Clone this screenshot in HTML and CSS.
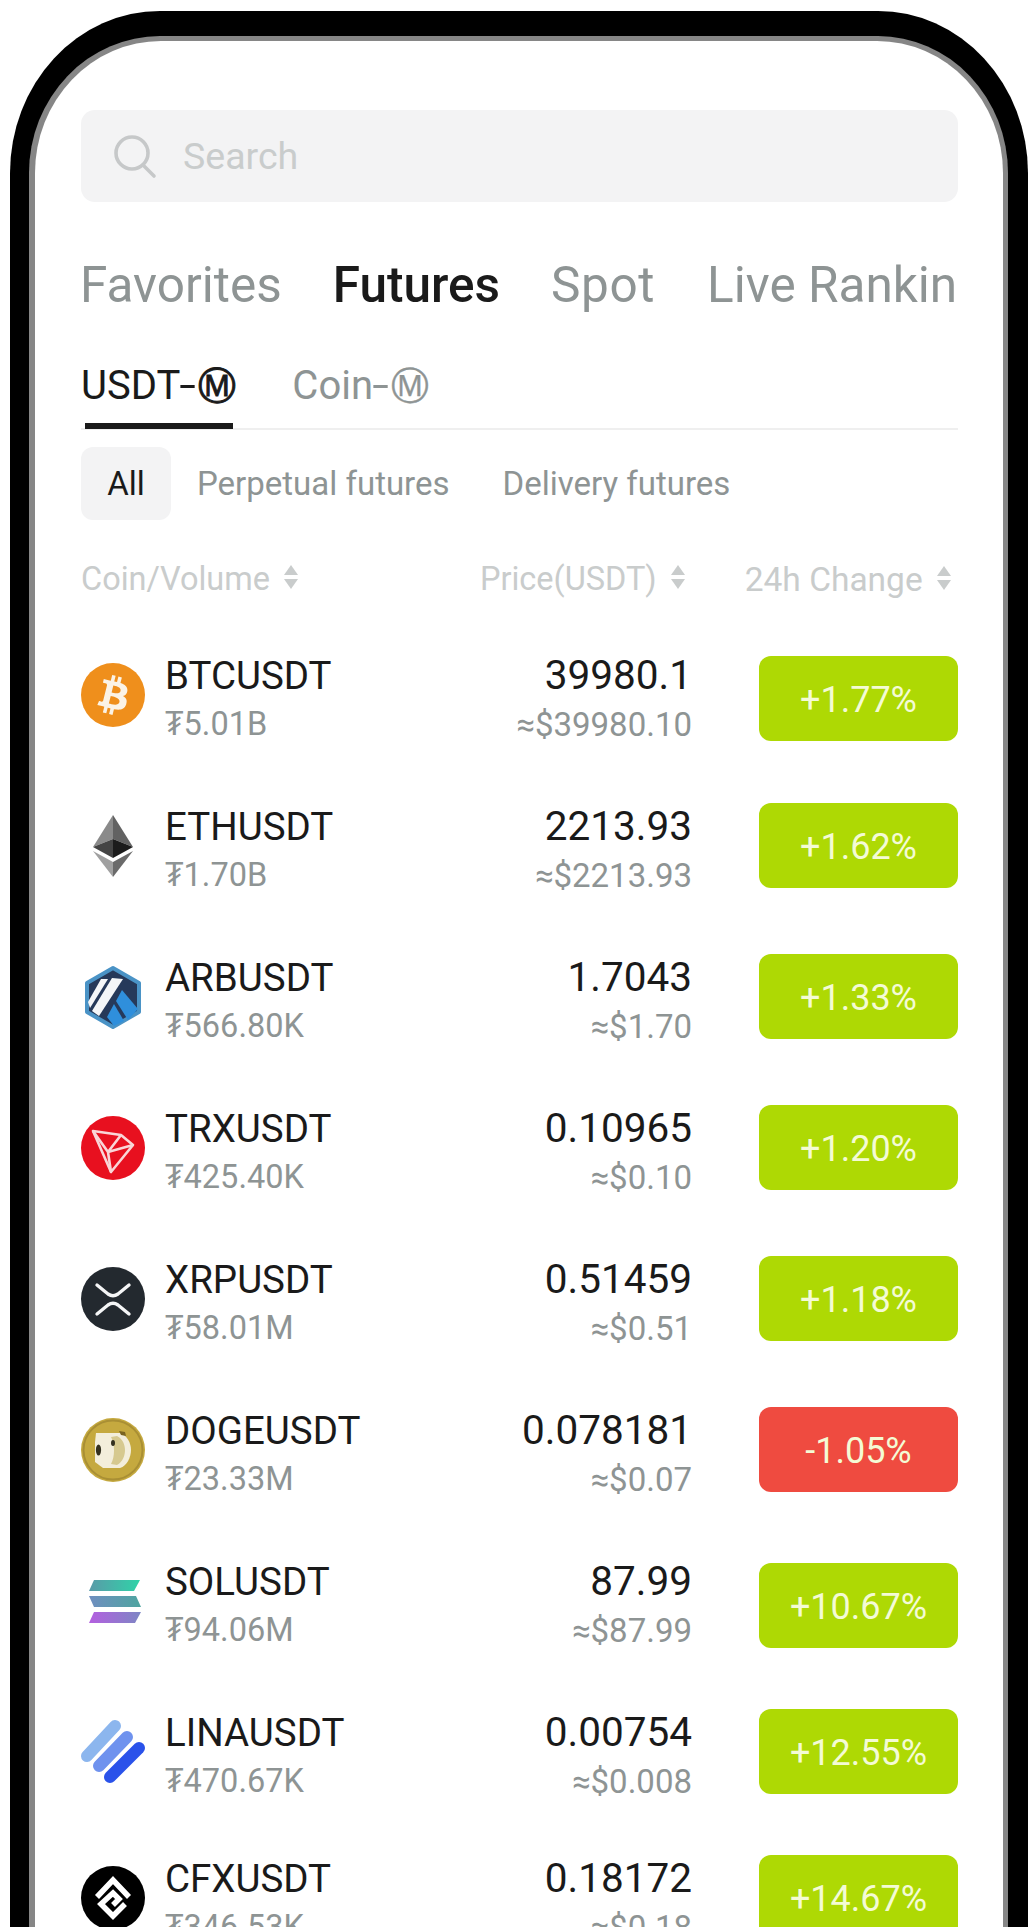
FILE: index.html
```html
<!DOCTYPE html>
<html lang="en">
<head>
  <meta charset="UTF-8" />
  <meta name="viewport" content="width=device-width, initial-scale=1.0"/>
  <title>Markets</title>
  <link rel="stylesheet" href="styles.css">
</head>
<body>
  <div class="phone">
    <div class="screen">

      <div class="search">
        <svg class="search-icon" viewBox="0 0 46 46" width="46" height="46">
          <circle cx="21" cy="20" r="16" fill="none" stroke="#c6c8c9" stroke-width="3.6"/>
          <path d="M32 32l11 11" fill="none" stroke="#c6c8c9" stroke-width="3.6" stroke-linecap="round"/>
        </svg>
        <span>Search</span>
      </div>

      <div class="tabs">
        <span>Favorites</span>
        <span class="active">Futures</span>
        <span class="spot">Spot</span>
        <span class="live">Live Rankin</span>
      </div>

      <div class="margin-tabs">
        <div class="margin-tab active">USDT<span class="dash">-</span><span class="m-mark">Ⓜ</span></div>
        <div class="margin-tab">Coin<span class="dash">-</span><span class="m-mark">Ⓜ</span></div>
      </div>

      <div class="filters">
        <span class="filter active">All</span>
        <span class="filter">Perpetual futures</span>
        <span class="filter">Delivery futures</span>
      </div>

      <div class="list-head">
        <div class="head-cell">Coin/Volume <i class="sort"></i></div>
        <div class="head-cell head-price">Price(USDT) <i class="sort"></i></div>
        <div class="head-cell head-change">24h Change <i class="sort"></i></div>
      </div>

      <div class="row">
        <svg class="coin" viewBox="0 0 32 32"><circle cx="16" cy="16" r="16" fill="#ef8f1c"/><path fill="#fbf3e6" d="M23.189 14.02c.314-2.096-1.283-3.223-3.465-3.975l.708-2.84-1.728-.43-.69 2.765c-.454-.114-.92-.22-1.385-.326l.695-2.783L15.596 6l-.708 2.839c-.376-.086-.746-.17-1.104-.26l.002-.009-2.384-.595-.46 1.846s1.283.294 1.256.312c.7.175.826.638.805 1.006l-.806 3.235c.048.012.11.03.18.057l-.183-.045-1.13 4.532c-.086.212-.303.531-.793.41.018.025-1.256-.313-1.256-.313l-.858 1.978 2.25.561c.418.105.828.215 1.231.318l-.715 2.872 1.727.43.708-2.84c.472.127.93.245 1.378.357l-.706 2.828 1.728.43.715-2.866c2.948.558 5.164.333 6.097-2.333.752-2.146-.037-3.385-1.588-4.192 1.13-.26 1.98-1.003 2.207-2.538zm-3.95 5.538c-.533 2.147-4.148.986-5.32.695l.95-3.805c1.172.293 4.929.872 4.37 3.11zm.535-5.569c-.487 1.953-3.495.96-4.47.717l.86-3.45c.975.243 4.118.696 3.61 2.733z"/></svg>
        <div class="names"><div class="name">BTCUSDT</div><div class="vol">₮5.01B</div></div>
        <div class="prices"><div class="price">39980.1</div><div class="approx">≈$39980.10</div></div>
        <div class="change up shift-sm">+1.77%</div>
      </div>

      <div class="row">
        <svg class="coin" viewBox="0 0 64 64">
          <polygon points="32,1 12,33 32,25" fill="#8a8a8a"/>
          <polygon points="32,1 52,33 32,25" fill="#626262"/>
          <polygon points="12,33 32,25 32,44" fill="#444"/>
          <polygon points="52,33 32,25 32,44" fill="#1c1c1c"/>
          <polygon points="12,37 32,48 32,63" fill="#a0a0a0"/>
          <polygon points="52,37 32,48 32,63" fill="#6a6a6a"/>
        </svg>
        <div class="names"><div class="name">ETHUSDT</div><div class="vol">₮1.70B</div></div>
        <div class="prices"><div class="price">2213.93</div><div class="approx">≈$2213.93</div></div>
        <div class="change up">+1.62%</div>
      </div>

      <div class="row">
        <svg class="coin" viewBox="0 0 64 64">
          <polygon points="32,3 58,18 58,47 32,62 6,47 6,18" fill="#26395a" stroke="#4a93c6" stroke-width="4" stroke-linejoin="round"/>
          <polygon points="31,13 42,14 18,51 11,46" fill="#f4f6f8"/>
          <polygon points="20,14 27,14 9,43 7,37" fill="#f4f6f8"/>
          <polygon points="41,25 57,44 47,55 35,36" fill="#2f8fdc"/>
          <polygon points="33,39 43,56 33,61 26,52" fill="#2f8fdc"/>
        </svg>
        <div class="names"><div class="name">ARBUSDT</div><div class="vol">₮566.80K</div></div>
        <div class="prices"><div class="price">1.7043</div><div class="approx">≈$1.70</div></div>
        <div class="change up">+1.33%</div>
      </div>

      <div class="row">
        <svg class="coin" viewBox="0 0 64 64">
          <circle cx="32" cy="32" r="32" fill="#e8101f"/>
          <g fill="none" stroke="#f9d5d7" stroke-width="2.6" stroke-linejoin="round">
            <polygon points="12,15 40,19 52,29 30,56"/>
            <path d="M12 15l15 21 13-17M27 36l25-7M27 36l3 20"/>
          </g>
        </svg>
        <div class="names"><div class="name">TRXUSDT</div><div class="vol">₮425.40K</div></div>
        <div class="prices"><div class="price">0.10965</div><div class="approx">≈$0.10</div></div>
        <div class="change up">+1.20%</div>
      </div>

      <div class="row">
        <svg class="coin" viewBox="0 0 64 64">
          <circle cx="32" cy="32" r="32" fill="#23292f"/>
          <g fill="none" stroke="#f4f5f6" stroke-width="3.4" stroke-linecap="round">
            <path d="M16 18l11 9c3 2 7 2 10 0l11-9"/>
            <path d="M16 47l11-9c3-2 7-2 10 0l11 9"/>
          </g>
        </svg>
        <div class="names"><div class="name">XRPUSDT</div><div class="vol">₮58.01M</div></div>
        <div class="prices"><div class="price">0.51459</div><div class="approx">≈$0.51</div></div>
        <div class="change up">+1.18%</div>
      </div>

      <div class="row">
        <svg class="coin" viewBox="0 0 64 64">
          <circle cx="32" cy="32" r="32" fill="#c5a93f"/>
          <circle cx="32" cy="32" r="29.5" fill="none" stroke="#a98f34" stroke-width="2"/>
          <path d="M15 15h24c7 2 11 10 11 17s-4 16-11 18H22l-8-6V24z" fill="#f3eedb"/>
          <path d="M36 18c6 3 8 9 8 14s-2 12-8 15l-6-1c4-7 4-20 0-27z" fill="#d6c98f"/>
          <ellipse cx="17.5" cy="32" rx="2.6" ry="5.5" fill="#33301f"/>
          <ellipse cx="32" cy="25" rx="2" ry="3" fill="#33301f"/>
          <path d="M38 13l6 1 1 4-5-1z" fill="#7a6420"/>
        </svg>
        <div class="names"><div class="name">DOGEUSDT</div><div class="vol">₮23.33M</div></div>
        <div class="prices"><div class="price">0.078181</div><div class="approx">≈$0.07</div></div>
        <div class="change down">-1.05%</div>
      </div>

      <div class="row">
        <svg class="coin" viewBox="0 0 64 64">
          <defs>
            <linearGradient id="solA" x1="0" x2="1"><stop offset="0" stop-color="#5a9aa8"/><stop offset="1" stop-color="#2fd3a8"/></linearGradient>
            <linearGradient id="solB" x1="0" x2="1"><stop offset="0" stop-color="#6f8ec0"/><stop offset="1" stop-color="#4fa5a0"/></linearGradient>
            <linearGradient id="solC" x1="0" x2="1"><stop offset="0" stop-color="#b45fe0"/><stop offset="1" stop-color="#7d86c4"/></linearGradient>
          </defs>
          <polygon points="13,11 59,11 53,22 8,22" fill="url(#solA)"/>
          <polygon points="8,27 55,27 60,38 13,38" fill="url(#solB)"/>
          <polygon points="13,43 60,43 54,54 8,54" fill="url(#solC)"/>
        </svg>
        <div class="names"><div class="name">SOLUSDT</div><div class="vol">₮94.06M</div></div>
        <div class="prices"><div class="price">87.99</div><div class="approx">≈$87.99</div></div>
        <div class="change up shift-lg">+10.67%</div>
      </div>

      <div class="row">
        <svg class="coin" viewBox="0 0 64 64">
          <g fill="none" stroke-width="12" stroke-linecap="round">
            <path d="M6 36L34 6" stroke="#8cb6ee"/>
            <path d="M18 46L46 17" stroke="#6f92ee"/>
            <path d="M29 57L58 28" stroke="#2a52ea"/>
          </g>
        </svg>
        <div class="names"><div class="name">LINAUSDT</div><div class="vol">₮470.67K</div></div>
        <div class="prices"><div class="price">0.00754</div><div class="approx">≈$0.008</div></div>
        <div class="change up">+12.55%</div>
      </div>

      <div class="row last">
        <svg class="coin" viewBox="0 0 64 64">
          <circle cx="32" cy="32" r="32" fill="#000"/>
          <g fill="none" stroke="#fff" stroke-width="5.5">
            <path d="M16 31L32 14l16 17"/>
            <path d="M44 38L32 50 20 38l12-11 6 6-6 6"/>
          </g>
        </svg>
        <div class="names"><div class="name">CFXUSDT</div><div class="vol">₮346.53K</div></div>
        <div class="prices"><div class="price">0.18172</div><div class="approx">≈$0.18</div></div>
        <div class="change up">+14.67%</div>
      </div>

    </div>
  </div>
</body>
</html>
```
FILE: styles.css
```css
html, body {
  margin: 0;
  padding: 0;
  height: 1927px;
  overflow: hidden;
  background: #fff;
  font-family: Roboto, "Noto Sans", sans-serif;
}

.phone {
  box-sizing: border-box;
  width: 1018px;
  height: 1916px;
  margin: 11px 0 0 10px;
  background: #868686;
  border-style: solid;
  border-color: #000;
  border-width: 25px 20px 0 19px;
  border-radius: 150px 150px 0 0 / 162px 162px 0 0;
  overflow: hidden;
}

.screen {
  box-sizing: border-box;
  height: 100%;
  margin: 5px 5px 0 6px;
  padding: 69px 45px 0 46px;
  background: #fff;
  border-radius: 126px 126px 0 0 / 132px 132px 0 0;
  overflow: hidden;
}

/* search */
.search {
  display: flex;
  align-items: center;
  height: 92px;
  background: #f3f3f4;
  border-radius: 14px;
  padding-left: 30px;
  font-size: 37.5px;
  line-height: 94px;
  color: #c9cccc;
}

.search-icon {
  margin-right: 26px;
}

/* top tabs */
.tabs {
  display: flex;
  gap: 51px;
  margin-top: 53px;
  margin-left: -1px;
  height: 60px;
  line-height: 60px;
  font-size: 49.5px;
  color: #8e9494;
  overflow: hidden;
  white-space: nowrap;
}

.tabs .active {
  color: #1a1a1a;
  font-weight: 500;
}

.tabs .spot {
  letter-spacing: 0.6px;
}

.tabs .live {
  margin-left: 1px;
}

/* USDT-M / Coin-M */
.margin-tabs {
  display: flex;
  gap: 56px;
  height: 83px;
  margin-top: 30px;
  border-bottom: 2px solid #efefef;
}

.margin-tab {
  position: relative;
  font-size: 40px;
  line-height: 82px;
  color: #8e9494;
}

.margin-tab.active {
  color: #1a1a1a;
}

.margin-tab.active::after {
  content: "";
  position: absolute;
  left: 4px;
  right: 3px;
  bottom: -1px;
  height: 6px;
  background: #1a1a1a;
}

.dash {
  display: inline-block;
  margin: 0 2px;
  transform: scaleX(1.5);
}

.m-mark {
  font-family: "DejaVu Sans", sans-serif;
  font-size: 38px;
  margin-left: 3px;
  -webkit-text-stroke: 0.4px #8e9494;
}

.margin-tab.active .m-mark {
  -webkit-text-stroke: 1px #1a1a1a;
}

/* filters */
.filters {
  display: flex;
  align-items: center;
  height: 73px;
  margin-top: 17px;
  font-size: 33px;
  color: #8e9494;
}

.filter {
  margin-right: 53px;
}

.filter.active {
  display: flex;
  align-items: center;
  justify-content: center;
  width: 90px;
  height: 73px;
  margin-right: 26px;
  background: #f3f3f4;
  border-radius: 12px;
  color: #1a1a1a;
}

/* list */
.list-head {
  display: flex;
  align-items: center;
  height: 80px;
  margin-top: 19px;
  font-size: 32.5px;
  color: #c9cccc;
}

.head-price {
  margin-left: auto;
}

.head-change {
  margin-left: 60px;
  margin-right: 7px;
  font-size: 33.5px;
}

.sort {
  display: inline-block;
  position: relative;
  width: 14px;
  height: 24px;
  margin-left: 6px;
  vertical-align: 1px;
}

.sort::before,
.sort::after {
  content: "";
  position: absolute;
  left: 0;
  border-left: 7px solid transparent;
  border-right: 7px solid transparent;
}

.sort::before {
  top: 0;
  border-bottom: 10px solid #c9cccc;
}

.sort::after {
  bottom: 0;
  border-top: 10px solid #c9cccc;
}

.row {
  display: flex;
  align-items: center;
  height: 151px;
}

.row.last {
  margin-top: -5px;
}

.coin {
  width: 64px;
  height: 64px;
  flex: none;
}

.names {
  margin-left: 20px;
  padding-top: 10px;
  flex: 1;
}

.name {
  font-size: 38.5px;
  line-height: 47px;
  color: #1a1a1a;
}

.price {
  font-size: 40.5px;
  line-height: 47px;
  color: #1a1a1a;
}

.vol {
  margin-top: 2px;
  font-size: 32.5px;
  line-height: 47px;
  color: #8e9494;
}

.approx {
  margin-top: 2px;
  font-size: 33px;
  line-height: 47px;
  color: #8e9494;
}

.prices {
  padding-top: 10px;
  text-align: right;
}

.change {
  width: 199px;
  height: 85px;
  line-height: 89px;
  margin-left: 67px;
  border-radius: 12px;
  text-align: center;
  font-size: 36px;
  color: #f4fbd5;
}

.up {
  background: #aed904;
}

.down {
  background: #ef4b40;
}

.shift-sm {
  margin-top: 8px;
}

.shift-lg {
  margin-top: 10px;
}
```
